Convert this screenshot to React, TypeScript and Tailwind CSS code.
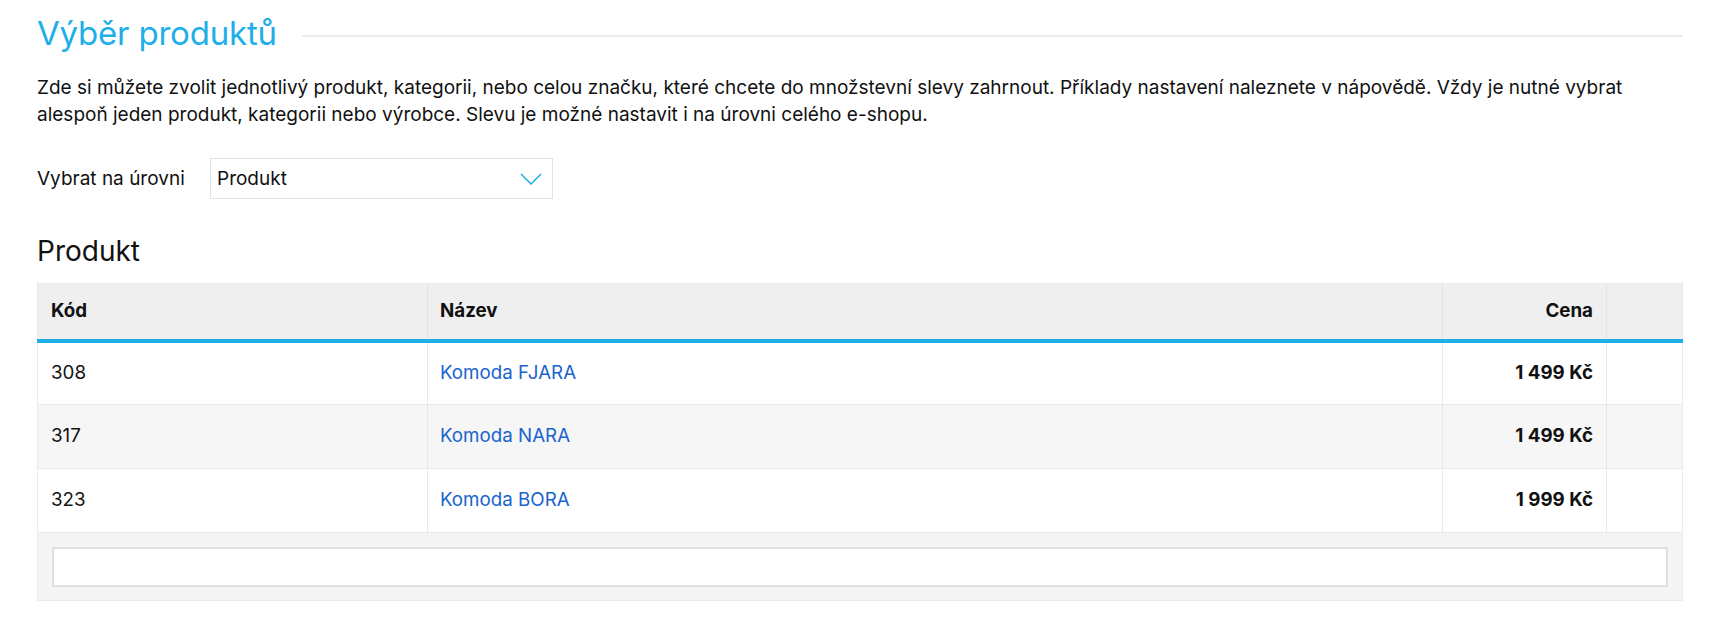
const rows = [
  { code: '308', name: 'Komoda FJARA', price: '1 499 Kč' },
  { code: '317', name: 'Komoda NARA', price: '1 499 Kč' },
  { code: '323', name: 'Komoda BORA', price: '1 999 Kč' },
];

function Chevron() {
  return (
    <svg width="22" height="12" viewBox="0 0 22 12" fill="none" className="shrink-0">
      <path d="M1 1 L11 11 L21 1" stroke="#1eaee8" strokeWidth="1.5" />
    </svg>
  );
}

export default function App() {
  return (
    <div className="min-h-screen bg-white pl-[37px] pr-[34px] pt-[13px] font-['Inter',sans-serif] text-[19px] text-[#111]">
      {/* Section title */}
      <div className="flex items-center gap-[25px]">
        <h2 className="text-[33px] leading-[41px] font-normal text-[#1eaee8] tracking-[-0.2px]">Výběr produktů</h2>
        <div className="mt-[5px] h-[2px] flex-1 bg-[#ededed]" />
      </div>

      <p className="mt-[20px] leading-[27px]">
        Zde si můžete zvolit jednotlivý produkt, kategorii, nebo celou značku, které chcete do množstevní slevy zahrnout. Příklady
        nastavení naleznete v nápovědě. Vždy je nutné vybrat alespoň jeden produkt, kategorii nebo výrobce. Slevu je možné nastavit i na
        úrovni celého e-shopu.
      </p>

      {/* Level select */}
      <div className="mt-[30px] flex items-center">
        <label className="w-[173px] shrink-0 leading-[27px]">Vybrat na úrovni</label>
        <div className="flex h-[41px] w-[343px] items-center justify-between border border-[#e3e3e3] pl-[6px] pr-[10px]">
          <span className="leading-[27px]">Produkt</span>
          <Chevron />
        </div>
      </div>

      <h3 className="mt-[35px] text-[28px] leading-[34px] font-normal">Produkt</h3>

      {/* Products table */}
      <table className="mt-[15px] w-full table-fixed border-collapse border border-[#ebebeb] text-[18.75px]">
        <colgroup>
          <col className="w-[390px]" />
          <col />
          <col className="w-[164px]" />
          <col className="w-[76px]" />
        </colgroup>
        <thead>
          <tr className="h-[57px] border-b-4 border-b-[#1eaee8] bg-[#efefef]">
            <th className="border-r border-[#e3e3e3] px-[13px] text-left font-bold">Kód</th>
            <th className="border-r border-[#e3e3e3] px-[12px] text-left font-bold">Název</th>
            <th className="border-r border-[#e3e3e3] px-[13px] text-right font-bold">Cena</th>
            <th />
          </tr>
        </thead>
        <tbody>
          {rows.map((r, i) => (
            <tr key={r.code} className={`h-[64px] border-b border-[#e8e8e8] ${i % 2 === 1 ? 'bg-[#f6f6f6]' : 'bg-white'}`}>
              <td className="border-r border-[#e8e8e8] px-[13px]">{r.code}</td>
              <td className="border-r border-[#e8e8e8] px-[12px]">
                <a href="#" className="text-[#1b63cf]">{r.name}</a>
              </td>
              <td className="border-r border-[#e8e8e8] px-[13px] text-right font-bold">{r.price}</td>
              <td />
            </tr>
          ))}
          <tr className="bg-[#f5f5f5]">
            <td colSpan={4} className="px-[14px] pt-[14px] pb-[13px]">
              <input type="text" className="block h-[40px] w-full border-2 border-[#e0e0e0] bg-white outline-none" />
            </td>
          </tr>
        </tbody>
      </table>
    </div>
  );
}
